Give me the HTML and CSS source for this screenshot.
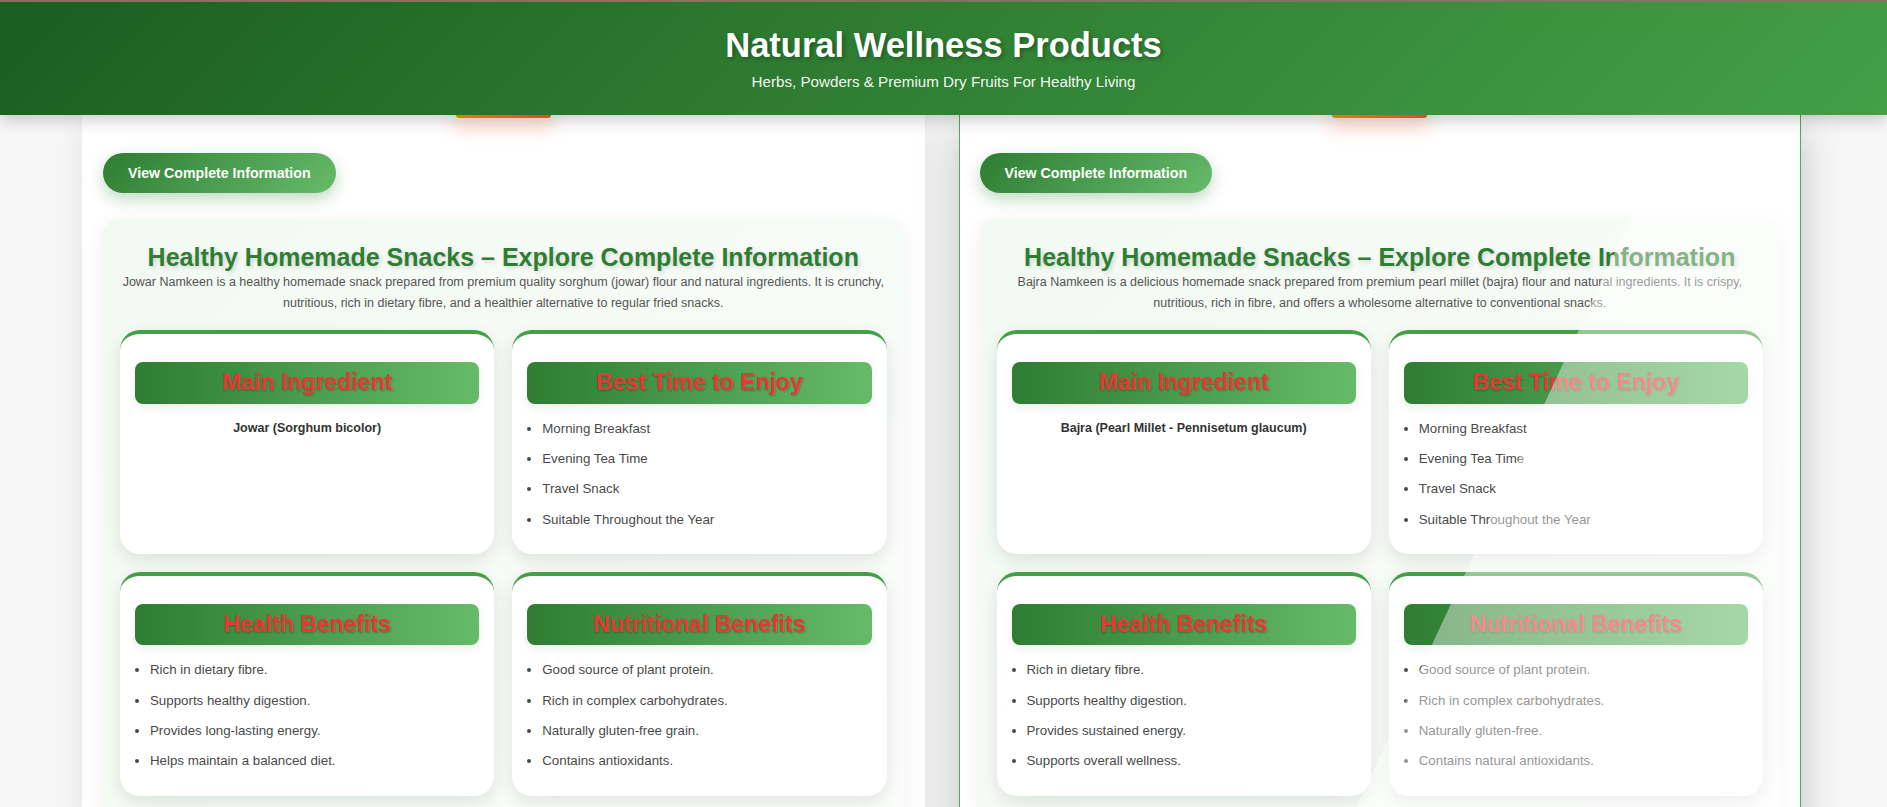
FILE: index.html
```html
<!DOCTYPE html>
<html lang="en">
<head>
<meta charset="utf-8">
<title>Natural Wellness Products</title>
<link rel="stylesheet" href="styles.css">
</head>
<body>
<header class="site-header">
  <h1 class="site-title">Natural Wellness Products</h1>
  <p class="site-subtitle">Herbs, Powders &amp; Premium Dry Fruits For Healthy Living</p>
</header>
<main class="product-grid">
  <article class="product-card">
    <div class="card-badge"></div>
    <a class="info-btn">View Complete Information</a>
    <section class="info-section">
      <h2 class="info-title">Healthy Homemade Snacks – Explore Complete Information</h2>
      <p class="info-desc">Jowar Namkeen is a healthy homemade snack prepared from premium quality sorghum (jowar) flour and natural ingredients. It is crunchy, nutritious, rich in dietary fibre, and a healthier alternative to regular fried snacks.</p>
      <div class="info-grid">
        <div class="info-box">
          <h3 class="info-box-title">Main Ingredient</h3>
          <p class="ingredient">Jowar (Sorghum bicolor)</p>
        </div>
        <div class="info-box">
          <h3 class="info-box-title">Best Time to Enjoy</h3>
          <ul class="info-list">
            <li>Morning Breakfast</li>
            <li>Evening Tea Time</li>
            <li>Travel Snack</li>
            <li>Suitable Throughout the Year</li>
          </ul>
        </div>
        <div class="info-box">
          <h3 class="info-box-title">Health Benefits</h3>
          <ul class="info-list">
            <li>Rich in dietary fibre.</li>
            <li>Supports healthy digestion.</li>
            <li>Provides long-lasting energy.</li>
            <li>Helps maintain a balanced diet.</li>
          </ul>
        </div>
        <div class="info-box">
          <h3 class="info-box-title">Nutritional Benefits</h3>
          <ul class="info-list">
            <li>Good source of plant protein.</li>
            <li>Rich in complex carbohydrates.</li>
            <li>Naturally gluten-free grain.</li>
            <li>Contains antioxidants.</li>
          </ul>
        </div>
      </div>
    </section>
  </article>
  <article class="product-card is-active">
    <div class="card-badge"></div>
    <a class="info-btn">View Complete Information</a>
    <section class="info-section">
      <h2 class="info-title">Healthy Homemade Snacks – Explore Complete Information</h2>
      <p class="info-desc">Bajra Namkeen is a delicious homemade snack prepared from premium pearl millet (bajra) flour and natural ingredients. It is crispy, nutritious, rich in fibre, and offers a wholesome alternative to conventional snacks.</p>
      <div class="info-grid">
        <div class="info-box">
          <h3 class="info-box-title">Main Ingredient</h3>
          <p class="ingredient">Bajra (Pearl Millet - Pennisetum glaucum)</p>
        </div>
        <div class="info-box">
          <h3 class="info-box-title">Best Time to Enjoy</h3>
          <ul class="info-list">
            <li>Morning Breakfast</li>
            <li>Evening Tea Time</li>
            <li>Travel Snack</li>
            <li>Suitable Throughout the Year</li>
          </ul>
        </div>
        <div class="info-box">
          <h3 class="info-box-title">Health Benefits</h3>
          <ul class="info-list">
            <li>Rich in dietary fibre.</li>
            <li>Supports healthy digestion.</li>
            <li>Provides sustained energy.</li>
            <li>Supports overall wellness.</li>
          </ul>
        </div>
        <div class="info-box">
          <h3 class="info-box-title">Nutritional Benefits</h3>
          <ul class="info-list">
            <li>Good source of plant protein.</li>
            <li>Rich in complex carbohydrates.</li>
            <li>Naturally gluten-free.</li>
            <li>Contains natural antioxidants.</li>
          </ul>
        </div>
      </div>
    </section>
  </article>
</main>
</body>
</html>
```
FILE: styles.css
```css
html, body {
  margin: 0;
  padding: 0;
  overflow: hidden;
}

body {
  background: #f7f7f7;
  font-family: "Liberation Sans", Arial, sans-serif;
  color: #444;
}

.site-header {
  position: relative;
  z-index: 10;
  border-top: 2px solid #8d6e63;
  background: linear-gradient(135deg, #1b5e20 0%, #2e7d32 45%, #43a047 100%);
  padding: 22.5px 20px 21px;
  text-align: center;
  color: #fff;
  box-shadow: 0 4px 16px rgba(0, 0, 0, 0.22);
}

.site-title {
  margin: 0 0 5px;
  font-size: 34.5px;
  line-height: 1.2;
  font-weight: 700;
  text-shadow: 2px 2px 4px rgba(0, 0, 0, 0.3);
}

.site-subtitle {
  margin: 0;
  font-size: 15.2px;
  line-height: 1.5;
  color: rgba(255, 255, 255, 0.96);
}

.product-grid {
  display: grid;
  grid-template-columns: 1fr 1fr;
  gap: 34px;
  padding: 0 86px 0 82px;
}

.product-card {
  position: relative;
  overflow: hidden;
  background: #fff;
  border: 1px solid #ffffff;
  border-top: 0;
  padding: 0 20px 20px;
  box-shadow: 0 10px 30px rgba(0, 0, 0, 0.09);
}

.product-card.is-active {
  border-color: #4caf50;
  box-shadow: 0 15px 40px rgba(0, 0, 0, 0.22);
}

.product-card.is-active::after {
  content: "";
  position: absolute;
  top: 0;
  bottom: 0;
  left: 719px;
  width: 700px;
  background: rgba(255, 255, 255, 0.42);
  transform: skewX(-25deg);
  transform-origin: top left;
  pointer-events: none;
}

.card-badge {
  width: 95px;
  height: 3px;
  margin: 0 auto;
  background: linear-gradient(135deg, #ff9800, #ff5722);
  border-radius: 0 0 6px 6px;
  box-shadow: 0 5px 18px 4px rgba(255, 87, 34, 0.3);
}

.info-btn {
  display: block;
  width: max-content;
  margin-top: 35px;
  padding: 12px 25px;
  border-radius: 25px;
  background: linear-gradient(135deg, #2e7d32, #66bb6a);
  color: #fff;
  font-size: 14.2px;
  line-height: 16px;
  font-weight: 700;
  box-shadow: 0 6px 16px rgba(46, 125, 50, 0.3);
}

.info-section {
  margin-top: 26px;
  padding: 23px 17px 20px;
  border-radius: 15px;
  background: linear-gradient(135deg, #f2f9f2, #fbfdfb);
  box-shadow: 0 5px 20px rgba(0, 0, 0, 0.07);
  text-align: center;
}

.info-title {
  margin: 0;
  font-size: 25px;
  line-height: 1.2;
  font-weight: 700;
  color: #2e7d32;
  text-shadow: 2px 2px 4px rgba(0, 0, 0, 0.15);
}

.info-desc {
  margin: 0 0 16px;
  font-size: 12.5px;
  line-height: 1.7;
  color: #555;
}

.info-grid {
  display: grid;
  grid-template-columns: 1fr 1fr;
  gap: 18px;
  text-align: left;
}

.info-box {
  background: #fff;
  border-top: 4px solid #43a047;
  border-radius: 20px;
  padding: 28px 15px 15px;
  box-shadow: 0 6px 18px rgba(0, 0, 0, 0.1);
}

.info-box-title {
  margin: 0 0 14px;
  padding: 7px 10px;
  border-radius: 8px;
  background: linear-gradient(90deg, #2e7d32, #66bb6a);
  color: #e53935;
  font-size: 23px;
  line-height: 1.2;
  font-weight: 700;
  text-align: center;
  text-shadow: 1px 1px 2px rgba(0, 0, 0, 0.25);
  box-shadow: 0 3px 10px rgba(0, 0, 0, 0.08);
}

.ingredient {
  margin: 0;
  font-size: 12.5px;
  line-height: 20px;
  font-weight: 700;
  color: #333;
  text-align: center;
}

.info-list {
  margin: 0;
  padding-left: 15px;
}

.info-list li {
  font-size: 13.3px;
  line-height: 1.6;
  margin-bottom: 9px;
  color: #4a4a4a;
}
```
